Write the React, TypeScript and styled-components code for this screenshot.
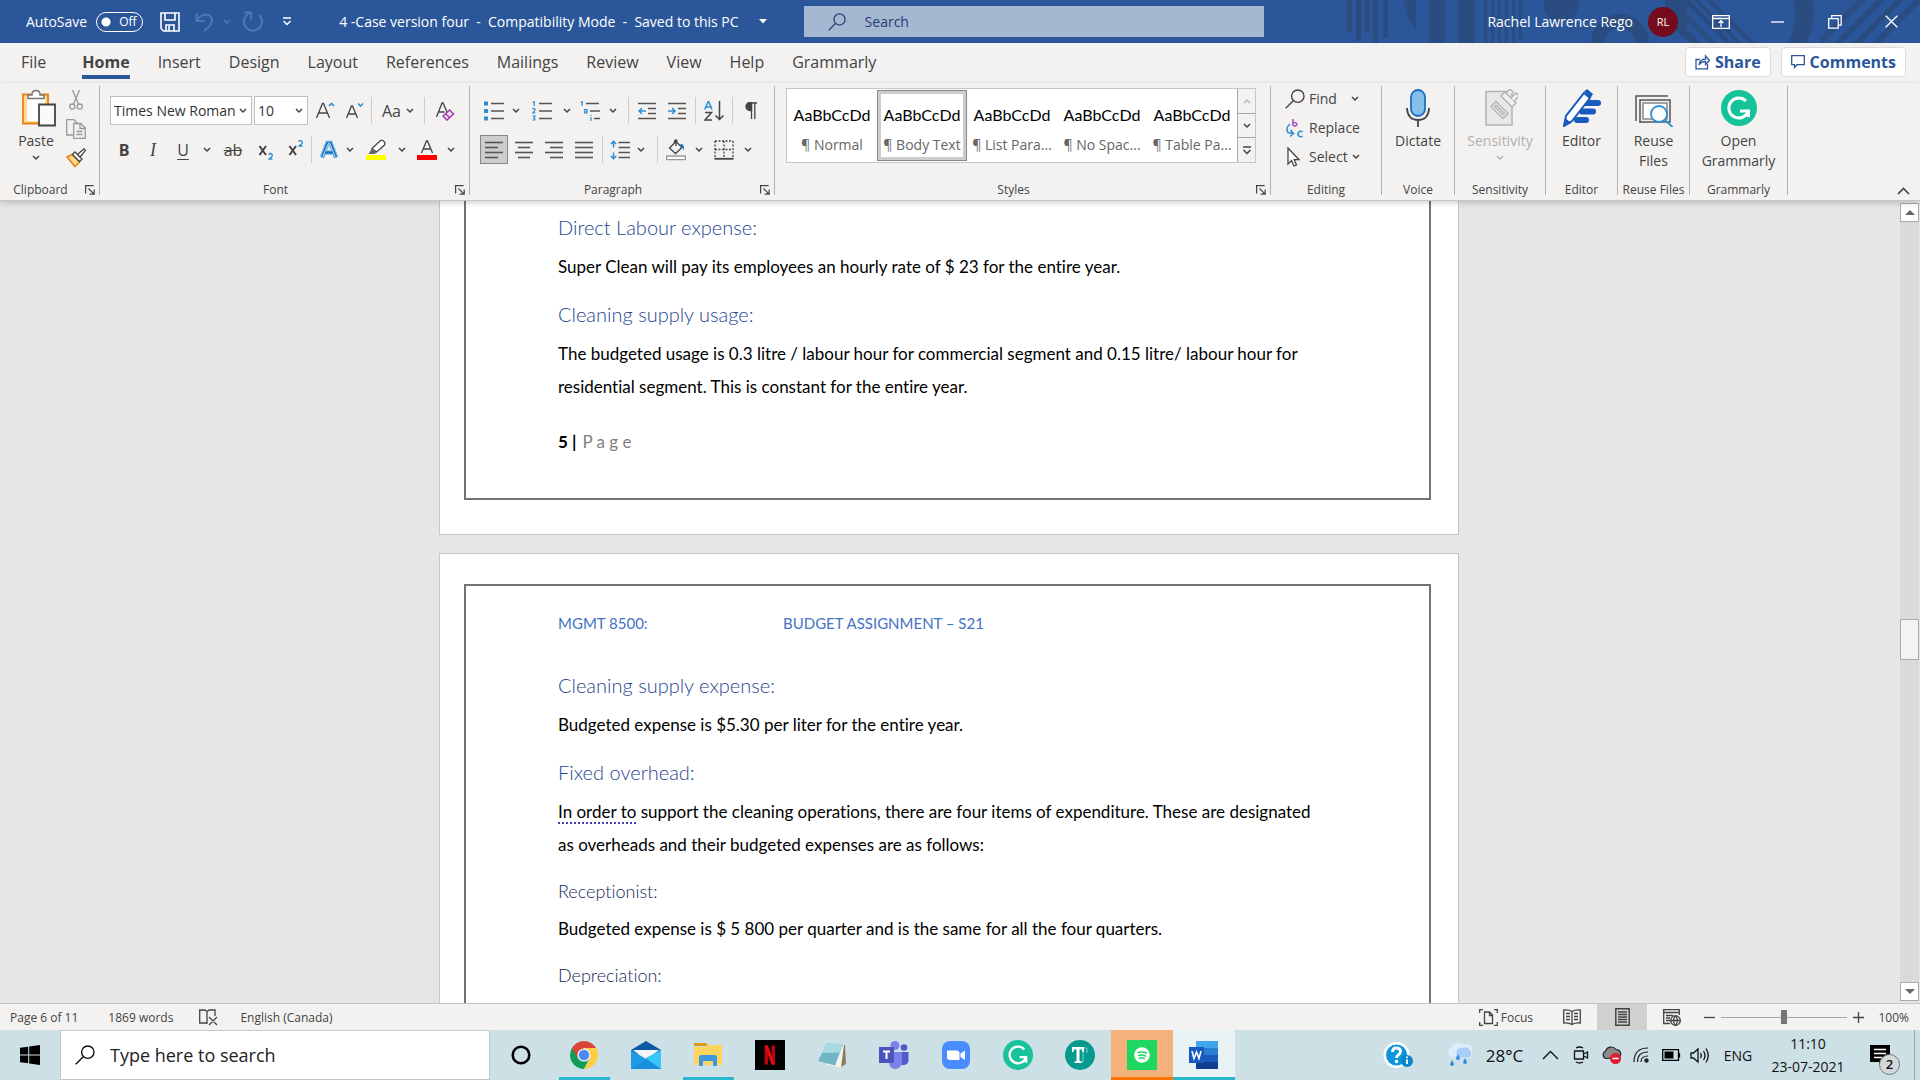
import React from "react";
import styled, { createGlobalStyle, css } from "styled-components";

const GlobalStyle = createGlobalStyle`
  *, *::before, *::after { box-sizing: border-box; }
  html, body, #root { height: 100%; }
  body { margin: 0; overflow: hidden; font-family: "Open Sans", "Noto Sans", sans-serif; font-size: 14px; color: #444; font-variant-ligatures: none; }
  button, input, select { font: inherit; color: inherit; margin: 0; }
  button { border: 0; padding: 0; background: none; display: inline-flex; align-items: center; justify-content: center; flex: none; }
  svg { display: block; flex: none; }
`;

const Window = styled.div`
  height: 100vh;
  display: flex;
  flex-direction: column;
`;
const Gap = styled.span<{ $w: number }>`
  width: ${(p) => p.$w}px;
`;
const Push = styled.span`
  flex: 1;
`;

/* ---------- Title bar ---------- */
const TitleBar = styled.header`
  position: relative;
  flex: none;
  height: 43px;
  background: #2b579a;
  color: #fff;
  display: flex;
  align-items: center;
  padding-left: 26px;
`;
const Pattern = styled.svg`
  position: absolute;
  right: 0;
  top: 0;
`;
const AutoSave = styled.label`
  display: flex;
  align-items: center;
  gap: 9px;
`;
const Toggle = styled.input`
  appearance: none;
  width: 47px;
  height: 20px;
  border: 1px solid #fff;
  border-radius: 10px;
  background: radial-gradient(circle at 9px 9px, #fff 4px, transparent 5px);
`;
const ToggleWrap = styled.span`
  position: relative;
  display: flex;
`;
const ToggleText = styled.span`
  position: absolute;
  left: 23px;
  top: 2px;
  font-size: 12px;
  line-height: 16px;
`;
const QuickTools = styled.div`
  display: flex;
  align-items: center;
  margin-left: 17px;
  width: 179px;
`;
const QuickButton = styled.button<{ $gap?: number; $dim?: boolean }>`
  margin-right: ${(p) => p.$gap ?? 0}px;
  opacity: ${(p) => (p.$dim ? 0.3 : 1)};
`;
const DocTitle = styled.button`
  gap: 20px;
  white-space: pre;
`;
const TitleSearch = styled.label`
  position: relative;
  display: flex;
  align-items: center;
  gap: 19px;
  flex: 0 1 460px;
  height: 31px;
  margin-left: 37px;
  padding-left: 24px;
  background: #a5b8d2;
  color: #1f4070;
`;
const BareInput = styled.input`
  flex: 1;
  min-width: 0;
  border: 0;
  padding: 0;
  background: none;
  outline: none;
  &::placeholder { color: currentColor; opacity: 1; }
`;
const Account = styled.div`
  position: relative;
  display: flex;
  align-items: center;
  gap: 15px;
  margin-left: auto;
`;
const Avatar = styled.button`
  width: 30px;
  height: 30px;
  border-radius: 50%;
  background: #750b1c;
  font-size: 11px;
  color: #fff;
`;
const WindowButtons = styled.div`
  position: relative;
  display: flex;
  margin-left: 14px;
`;
const WindowButton = styled.button`
  width: 57px;
  height: 43px;
`;

/* ---------- Tabs ---------- */
const TabBar = styled.nav`
  flex: none;
  height: 40px;
  background: #f3f2f1;
  display: flex;
  align-items: flex-start;
  gap: 28px;
  padding: 0 14px 0 21px;
  font-size: 16px;
`;
const Tab = styled.button<{ $active?: boolean }>`
  height: 36px;
  border-top: 5px solid transparent;
  border-bottom: 4px solid transparent;
  line-height: 22px;
  &:first-child { margin-right: 8px; }
  ${(p) => p.$active && css`font-weight: 700; border-bottom-color: #2b579a;`}
`;
const TabActions = styled.div`
  display: flex;
  gap: 10px;
  margin: 4px 0 0 auto;
`;
const ActionButton = styled.button`
  height: 30px;
  padding: 0 9px;
  gap: 5px;
  background: #fff;
  border: 1px solid #dedcda;
  border-radius: 4px;
  color: #2b579a;
  font-weight: 700;
`;

/* ---------- Ribbon ---------- */
const Ribbon = styled.section`
  flex: none;
  position: relative;
  z-index: 1;
  height: 118px;
  background: #f3f2f1;
  border-bottom: 1px solid #c8c6c4;
  box-shadow: 0 2px 6px rgba(0, 0, 0, 0.18);
  display: flex;
  padding-top: 3px;
`;
const Group = styled.div<{ $w: number }>`
  flex: none;
  width: ${(p) => p.$w}px;
  height: 109px;
  border-right: 1px solid #b3b0ad;
  display: flex;
  flex-direction: column;
`;
const GroupBody = styled.div<{ $pad?: number }>`
  flex: 1;
  display: flex;
  padding-left: ${(p) => p.$pad ?? 0}px;
`;
const GroupFooter = styled.div<{ $launch?: boolean }>`
  height: 10px;
  display: grid;
  grid-template-columns: ${(p) => (p.$launch ? "1fr 18px" : "1fr")};
  grid-template-rows: 10px;
  align-items: center;
  justify-items: center;
  font-size: 12px;
  line-height: 18px;
  white-space: nowrap;
`;
const ToolRows = styled.div`
  display: flex;
  flex-direction: column;
  padding-top: 10px;
  gap: 10px;
`;
const ToolRow = styled.div`
  display: flex;
  align-items: center;
  height: 29px;
`;
const Tool = styled.button<{ $w: number; $on?: boolean }>`
  width: ${(p) => p.$w}px;
  height: 29px;
  gap: 5px;
  ${(p) => p.$on && css`background: #cfcdcb; border: 1px solid #8a8886;`}
`;
const Divider = styled.span<{ $l?: number; $r?: number }>`
  width: 1px;
  height: 27px;
  background: #cfcdcb;
  margin: 0 ${(p) => p.$r ?? 1}px 0 ${(p) => p.$l ?? 1}px;
`;
const Combo = styled.span<{ $w: number }>`
  position: relative;
  display: flex;
  align-items: center;
  width: ${(p) => p.$w}px;
  height: 29px;
  margin-right: 2px;
  border: 1px solid #c2c0be;
  background: #fff;
  padding-right: 4px;
`;
const ComboSelect = styled.select`
  appearance: none;
  flex: 1;
  min-width: 0;
  border: 0;
  padding: 0 0 0 3px;
  background: none;
  color: #333;
  overflow: hidden;
  text-overflow: clip;
`;
const BigButton = styled.button`
  flex: 1;
  flex-direction: column;
  justify-content: flex-start;
  padding-top: 3px;
  line-height: 20px;
  gap: 4px;
  &:disabled { color: #b1afad; }
`;
const Column = styled.div<{ $gap: number; $top: number }>`
  display: flex;
  flex-direction: column;
  align-items: flex-start;
  gap: ${(p) => p.$gap}px;
  padding-top: ${(p) => p.$top}px;
`;
const PasteColumn = styled.div`
  width: 50px;
  display: flex;
  flex-direction: column;
`;
const ClipTool = styled.button`
  width: 30px;
  height: 20px;
`;
const EditRow = styled.button`
  height: 21px;
  gap: 4px;
`;
const Gallery = styled.div`
  display: flex;
  height: 75px;
  margin: 2px 0 0;
  border: 1px solid #c8c6c4;
  background: #fff;
`;
const StyleCard = styled.button<{ $on?: boolean }>`
  width: 90px;
  height: 71px;
  margin-top: 1px;
  flex-direction: column;
  gap: 10px;
  line-height: 20px;
  color: #666;
  border: 4px solid transparent;
  padding-top: 9px;
  white-space: nowrap;
  ${(p) => p.$on && css`border-color: #cfcdcb; outline: 1px solid #8a8886; outline-offset: -1px;`}
`;
const Sample = styled.span`
  font-family: Lato, "Open Sans", sans-serif;
  font-size: 16px;
  color: #000;
`;
const GalleryScroll = styled.div`
  display: flex;
  flex-direction: column;
  width: 18px;
  background: #f3f2f1;
  border-left: 1px solid #a9a7a5;
`;
const GalleryArrow = styled.button`
  flex: 1;
  & + & { border-top: 1px solid #a9a7a5; }
`;
const Collapse = styled.button`
  margin: auto 9px 2px auto;
  width: 16px;
  height: 14px;
`;

/* ---------- Document ---------- */
const Workspace = styled.main`
  flex: 1;
  min-height: 0;
  display: flex;
  background: #e6e6e6;
`;
const Pages = styled.div`
  flex: 1;
  overflow: hidden;
  display: flex;
  flex-direction: column;
  align-items: center;
  gap: 18px;
`;
const Sheet = styled.article<{ $part: "end" | "start" }>`
  flex: none;
  width: 1020px;
  max-width: 100%;
  background: #fff;
  border: 1px solid #c6c6c6;
  padding: ${(p) => (p.$part === "end" ? "0 27px 34px 24px" : "30px 27px 34px 24px")};
  ${(p) => p.$part === "end" && css`border-top: 0;`}
`;
const Frame = styled.div<{ $part: "end" | "start" }>`
  display: flex;
  flex-direction: column;
  border: 2px solid #767171;
  padding: ${(p) => (p.$part === "end" ? "0 104px 40px 92px" : "27px 104px 80px 92px")};
  ${(p) => p.$part === "end" && css`border-top: 0;`}
`;
const RunningHead = styled.div`
  display: grid;
  grid-template-columns: 225px 1fr;
  margin-bottom: 21px;
  font-family: Lato, "Open Sans", sans-serif;
  font-size: 15px;
  line-height: 20px;
  color: #4472c4;
`;
const Heading2 = styled.h2`
  margin: 17px 0 8px;
  font-family: Lato, "Open Sans", sans-serif;
  font-weight: 300;
  font-size: 20px;
  line-height: 29px;
  color: #1f4690;
  &:first-child { margin-top: 12px; }
`;
const Heading3 = styled.h3`
  margin: 17px 0 7px;
  font-family: Lato, "Open Sans", sans-serif;
  font-weight: 300;
  font-size: 18px;
  line-height: 27px;
  color: #142a55;
`;
const Body = styled.p`
  margin: 0;
  font-family: Lato, "Open Sans", sans-serif;
  font-size: 17px;
  line-height: 33px;
  color: #000;
`;
const Grammar = styled.span`
  text-decoration: underline dotted #4a3fb0 2px;
  text-underline-offset: 4px;
`;
const PageNumber = styled.footer`
  margin-top: 22px;
  font-family: Lato, "Open Sans", sans-serif;
  font-size: 17px;
  line-height: 33px;
  color: #7f7f7f;
  display: flex;
  gap: 6px;
`;
const Strong = styled.strong`
  color: #000;
`;
const ScrollBar = styled.div`
  flex: none;
  width: 22px;
  padding: 2px 1px 2px 2px;
  display: flex;
  flex-direction: column;
`;
const ScrollButton = styled.button`
  width: 19px;
  height: 19px;
  background: #fff;
  border: 1px solid #ababab;
`;
const ScrollTrack = styled.div`
  flex: 1;
  display: flex;
  flex-direction: column;
  background: #dadada;
`;
const Spacer = styled.div<{ $grow: number }>`
  flex: ${(p) => p.$grow} 0 0;
`;
const ScrollThumb = styled.div`
  height: 41px;
  background: #f3f3f3;
  border: 1px solid #ababab;
`;

/* ---------- Status bar ---------- */
const StatusBar = styled.footer`
  flex: none;
  height: 27px;
  background: #f3f2f1;
  border-top: 1px solid #c8c6c4;
  display: flex;
  align-items: center;
  padding: 0 11px 0 10px;
  font-size: 12px;
`;
const StatusItem = styled.button<{ $gap?: number }>`
  margin-right: ${(p) => p.$gap ?? 0}px;
  gap: 3px;
`;
const ViewButton = styled.button<{ $on?: boolean }>`
  width: 50px;
  height: 26px;
  background: ${(p) => (p.$on ? "#d2d0ce" : "none")};
`;
const Zoom = styled.div`
  display: flex;
  align-items: center;
  margin-left: 7px;
  gap: 6px;
`;
const ZoomRange = styled.input`
  appearance: none;
  width: 126px;
  height: 14px;
  background: linear-gradient(#a8a6a4, #a8a6a4) center / 100% 1px no-repeat;
  &::-webkit-slider-thumb { appearance: none; width: 6px; height: 14px; background: #767676; }
`;
const PercentValue = styled.button`
  width: 45px;
  justify-content: flex-end;
`;

/* ---------- Taskbar ---------- */
const Taskbar = styled.footer`
  flex: none;
  height: 50px;
  background: #cce0e6;
  display: flex;
  align-items: stretch;
  color: #111;
`;
const Start = styled.button`
  width: 60px;
`;
const TaskSearch = styled.label`
  flex: 0 1 430px;
  display: flex;
  align-items: center;
  gap: 15px;
  padding-left: 14px;
  background: #fff;
  border: 1px solid #c4c8ca;
  color: #222;
  font-size: 18px;
`;
const TaskButton = styled.button<{ $bar?: string; $bg?: string; $full?: boolean }>`
  position: relative;
  width: 62px;
  background: ${(p) => p.$bg ?? "none"};
  ${(p) =>
    p.$bar &&
    css`
      &::after {
        content: "";
        position: absolute;
        bottom: 0;
        left: ${p.$full ? 0 : 6}px;
        right: ${p.$full ? 0 : 5}px;
        height: 3px;
        background: ${p.$bar};
      }
    `}
`;
const Tray = styled.div`
  display: flex;
  margin-left: auto;
  align-items: stretch;
`;
const TrayButton = styled.button<{ $w: number }>`
  width: ${(p) => p.$w}px;
`;
const Weather = styled.button`
  width: 92px;
  gap: 14px;
  font-size: 17px;
  white-space: nowrap;
`;
const Clock = styled.button`
  width: 92px;
  flex-direction: column;
  line-height: 23px;
`;
const Peek = styled.div`
  width: 6px;
  border-left: 1px solid #93a9b0;
`;
const Badged = styled.span`
  position: relative;
  margin-right: 14px;
`;
const Badge = styled.span`
  position: absolute;
  left: 9px;
  top: 9px;
  width: 21px;
  height: 21px;
  border: 1px solid #777;
  border-radius: 50%;
  background: #d3d8da;
  font-size: 13px;
  font-weight: 600;
  line-height: 19px;
`;

/* ---------- Icons ---------- */
type IconProps = { w?: number; h?: number; vb?: string; children: React.ReactNode; stroke?: string; sw?: number };
const Icon = ({ w = 20, h = 20, vb, children, stroke = "#444", sw = 1.3 }: IconProps) => (
  <svg width={w} height={h} viewBox={vb ?? `0 0 ${w} ${h}`} fill="none" stroke={stroke} strokeWidth={sw} aria-hidden="true">
    {children}
  </svg>
);
const Chevron = ({ c = "#444" }: { c?: string }) => (
  <Icon w={8} h={6} stroke={c} sw={1.5}><path d="M1 1l3 3 3-3" /></Icon>
);
const Magnifier = ({ s = 20, c = "#444", sw = 1.4 }: { s?: number; c?: string; sw?: number }) => (
  <Icon w={s} h={s} vb="0 0 20 20" stroke={c} sw={sw}><circle cx="12.8" cy="7.2" r="6.2" /><path d="M8.3 11.7L.7 19.3" /></Icon>
);
const Launcher = ({ name }: { name: string }) => (
  <button aria-label={name + " settings"}>
    <Icon w={10} h={10} sw={1.2}><path d="M.6 8.5V.6h8M3.5 3.5l5.3 5.3M9.2 4.6v4.6H4.6" /></Icon>
  </button>
);
const Lines = ({ rows }: { rows: [number, number][] }) => (
  <Icon w={20} h={20} stroke="#555" sw={1.6}>
    {rows.map(([a, b], i) => <path key={i} d={`M${a} ${2.5 + i * 5}H${b}`} />)}
  </Icon>
);
const Footer = ({ name, launch }: { name: string; launch?: boolean }) => (
  <GroupFooter $launch={launch}><span>{name}</span>{launch && <Launcher name={name} />}</GroupFooter>
);

const TABS = ["File", "Home", "Insert", "Design", "Layout", "References", "Mailings", "Review", "View", "Help", "Grammarly"];
const STYLES = ["Normal", "Body Text", "List Para...", "No Spac...", "Table Pa..."];

const TitlePattern = () => (
  <Pattern width="580" height="43" viewBox="1340 0 580 43" fill="#2a4c80" aria-hidden="true">
    <path d="M1347 0h5v32h-5zM1356 0h5v41h-5zM1365 0h5v32h-5zM1373 0h5v43h-5zM1383 0h5v38h-5zM1404 0h12v31q-11-15-12-31z" />
    <path d="M1429 0h16v43h-16zM1458 0h16v43h-16zM1484 0h3v43h-3zM1491 0h3v43h-3zM1498 0h3v43h-3zM1505 0h3v43h-3zM1512 0h3v43h-3zM1519 0h3v40h-3z" />
    <circle cx="1561" cy="5" r="17" />
    <circle cx="1620" cy="43" r="22" fill="none" stroke="#2a4c80" strokeWidth="14" />
    <path d="M1665 0h25l43 43h-8l-38-38v8l30 30h-8l-22-22v8l14 14h-8q-30-15-28-43z" />
    <path d="M1693 0h6l43 43h-6zM1706 0h6l43 43h-6z" />
    <path d="M1793 0h20q3 25-7 43h-18q11-22 5-43zM1820 38l38-38h8l-43 43h-3zM1834 43l43-43h8l-43 43zM1853 43l43-43h8l-43 43zM1872 43l43-43h5v3l-40 40z" />
  </Pattern>
);

const TitleRegion = () => (
  <TitleBar>
    <TitlePattern />
    <AutoSave>
      AutoSave
      <ToggleWrap><Toggle type="checkbox" /><ToggleText>Off</ToggleText></ToggleWrap>
    </AutoSave>
    <QuickTools>
      <QuickButton $gap={15} aria-label="Save">
        <Icon w={20} h={20} stroke="#fff" sw={1.6}><path d="M1 1h18v18H3.5L1 16.5zM5 1v7h10V1M6 19v-6h8v6M9 14v5" /></Icon>
      </QuickButton>
      <QuickButton $gap={9} $dim aria-label="Undo">
        <Icon w={19} h={20} stroke="#a9c4ee" sw={1.8}><path d="M1.500 1v8h8M1.800 8.800C6 .500 17 .500 17 8.500C17 13 12 16 9 19" /></Icon>
      </QuickButton>
      <QuickButton $gap={12} $dim aria-label="Undo history"><Chevron c="#a9c4ee" /></QuickButton>
      <QuickButton $gap={18} $dim aria-label="Repeat">
        <Icon w={21} h={21} stroke="#a9c4ee" sw={1.8}><path d="M1 1.500h7v7M7.500 2A9 9 0 1 0 16 4" /></Icon>
      </QuickButton>
      <QuickButton aria-label="Customize toolbar">
        <Icon w={10} h={9} stroke="#fff" sw={1.4}><path d="M1 1h8M1.500 4l3.500 3.500L8.500 4" /></Icon>
      </QuickButton>
    </QuickTools>
    <DocTitle>
      {"4 -Case version four  -  Compatibility Mode  -  Saved to this PC"}
      <Icon w={8} h={5} stroke="none"><path d="M0 0h8L4 4.500z" fill="#fff" /></Icon>
    </DocTitle>
    <TitleSearch>
      <Magnifier s={18} c="#1f4070" />
      <BareInput placeholder="Search" aria-label="Search" />
    </TitleSearch>
    <Account>Rachel Lawrence Rego<Avatar>RL</Avatar></Account>
    <WindowButtons>
      <WindowButton aria-label="Ribbon display options">
        <Icon w={18} h={14} stroke="#fff" sw={1.3}><path d="M.7.7h16.600v12.600H.7zM.7 3.500h16.600M9 12V6M6.500 8L9 5.700 11.500 8" /></Icon>
      </WindowButton>
      <WindowButton aria-label="Minimize"><Icon w={13} h={2} stroke="#fff"><path d="M0 1h13" /></Icon></WindowButton>
      <WindowButton aria-label="Restore">
        <Icon w={14} h={14} stroke="#fff"><path d="M.7 3.700h9.500v9.500H.7zM3.700 3.500V.7h9.500v9.500h-3" /></Icon>
      </WindowButton>
      <WindowButton aria-label="Close"><Icon w={13} h={13} stroke="#fff"><path d="M.7.7l11.600 11.600M12.300.7L.7 12.300" /></Icon></WindowButton>
    </WindowButtons>
  </TitleBar>
);

const Letter = styled.span<{ $s?: number; $b?: boolean; $i?: boolean; $u?: boolean; $x?: boolean }>`
  font-size: ${(p) => p.$s ?? 16}px;
  line-height: 20px;
  font-weight: ${(p) => (p.$b ? 700 : 400)};
  font-style: ${(p) => (p.$i ? "italic" : "normal")};
  font-family: ${(p) => (p.$i ? '"Liberation Serif", serif' : "inherit")};
  text-decoration: ${(p) => (p.$u ? "underline" : p.$x ? "line-through" : "none")};
  text-underline-offset: 3px;
`;

const RibbonRegion = () => (
  <Ribbon>
    <Group $w={100}>
      <GroupBody $pad={11}>
        <PasteColumn>
          <BigButton>
            <Icon w={42} h={38} vb="-5 0 42 38" sw={1.8}>
              <path d="M3 5.500h25v29H3z" fill="#fbdc8d" stroke="#e5811a" />
              <path d="M7 8h18v24H7z" fill="#fff" stroke="none" />
              <path d="M8 9.500V6h4q0-4.500 4-4.500T20 6h4v3.500z" fill="#fff" stroke="#777" strokeWidth="1.500" />
              <path d="M19 15.500h16v21H19z" fill="#fafafa" />
            </Icon>
            Paste
            <Chevron />
          </BigButton>
        </PasteColumn>
        <Column $gap={9} $top={4}>
          <ClipTool aria-label="Cut">
            <Icon w={14} h={20} stroke="#999"><path d="M3.500 0l6 14M10.500 0l-6 14" /><circle cx="3.300" cy="16.600" r="2.600" /><circle cx="10.700" cy="16.600" r="2.600" /></Icon>
          </ClipTool>
          <ClipTool aria-label="Copy">
            <Icon w={20} h={20} stroke="#999"><path d="M7 16H.7V.7H8L11 4M7.700 4.500h7l4.600 4.500v10.300H7.700zM14 4.500V9.500h5M10.500 12.500h6M10.500 15.500h6" /></Icon>
          </ClipTool>
          <ClipTool aria-label="Format painter">
            <Icon w={20} h={20}><path d="M1 9L6 6.500l7.500 7.500L9 18.500z" fill="#fbdc8d" stroke="#e5811a" strokeWidth="1.600" /><path d="M6.500 6.500L9 4l7 7-2.500 2.500z" fill="#fff" /><path d="M11.500 6.500L18 .8l1.500 1.500-5.500 6.700z" fill="#fff" /></Icon>
          </ClipTool>
        </Column>
      </GroupBody>
      <Footer name="Clipboard" launch />
    </Group>

    <Group $w={370}>
      <GroupBody $pad={10}>
        <ToolRows>
          <ToolRow>
            <Combo $w={142}><ComboSelect aria-label="Font"><option>Times New Roman</option></ComboSelect><Chevron /></Combo>
            <Combo $w={54}><ComboSelect aria-label="Font size"><option>10</option></ComboSelect><Chevron /></Combo>
            <Tool $w={30} aria-label="Grow font"><Icon w={20} h={20}><path d="M1.500 17L7.500 2.500h1L14.500 17M4 12h8" /><path d="M14 5l2.500-2.500L19 5" stroke="#2b8fd6" strokeWidth="1.600" /></Icon></Tool>
            <Tool $w={30} aria-label="Shrink font"><Icon w={20} h={20}><path d="M1.500 17L6.500 5h1l5 12M3.500 13h7" /><path d="M13 2.500L15.500 5 18 2.500" stroke="#2b8fd6" strokeWidth="1.600" /></Icon></Tool>
            <Divider />
            <Tool $w={50} aria-label="Change case"><Letter>Aa</Letter><Chevron /></Tool>
            <Divider />
            <Tool $w={38} aria-label="Clear formatting">
              <Icon w={20} h={20}><path d="M1.500 16L7 2h1l4 9M3.500 11h6" /><path d="M8 15l6.500-6 4 4L12 19zM10.500 12.500l4 4" stroke="#a33bab" strokeWidth="1.500" fill="#f3e3f5" /></Icon>
            </Tool>
          </ToolRow>
          <ToolRow>
            <Tool $w={28} aria-label="Bold"><Letter $b>B</Letter></Tool>
            <Tool $w={30} aria-label="Italic"><Letter $s={18} $i>I</Letter></Tool>
            <Tool $w={30} aria-label="Underline"><Letter $u>U</Letter></Tool>
            <Tool $w={18} aria-label="Underline style"><Chevron /></Tool>
            <Tool $w={34} aria-label="Strikethrough"><Letter $x>ab</Letter></Tool>
            <Tool $w={32} aria-label="Subscript"><Icon w={16} h={20} sw={2}><path d="M1.500 6l6.500 9M8 6l-6.500 9" /><path d="M10.500 14.500q2-2 3.500 0t-3.500 4.500h4" stroke="#2b8fd6" strokeWidth="1.300" /></Icon></Tool>
            <Tool $w={28} aria-label="Superscript"><Icon w={16} h={20} sw={2}><path d="M1.500 6l6.500 9M8 6l-6.500 9" /><path d="M10.500 1.500q2-2 3.500 0t-3.500 4.500h4" stroke="#2b8fd6" strokeWidth="1.300" /></Icon></Tool>
            <Divider />
            <Tool $w={32} aria-label="Text effects"><Icon w={20} h={20} stroke="#8fc6ee" sw={5}><path d="M3 17.500L8.500 3h3L17 17.500M5.500 12.500h9" /><path d="M3 17.500L8.500 3h3L17 17.500M5.500 12.500h9" stroke="#1a70bf" strokeWidth="2.600" /><path d="M3.500 17.500L9.500 3h1l6 14.500" stroke="#fff" strokeWidth=".7" /></Icon></Tool>
            <Tool $w={10} aria-label="Text effects options"><Chevron /></Tool>
            <Tool $w={42} aria-label="Highlight"><Icon w={20} h={22}><path d="M6 9.500l8.500-8q2-1 3.500 1t.500 3.500L10.500 13z" fill="#fff" /><path d="M6 9l5 4.500-3 1.500H2.500z" fill="#666" stroke="none" /><path d="M0 16h20v5H0z" fill="#ff0" stroke="none" /></Icon></Tool>
            <Tool $w={10} aria-label="Highlight color"><Chevron /></Tool>
            <Tool $w={40} aria-label="Font color"><Icon w={20} h={22}><path d="M4.500 14L9.500 2h1l5 12M6.500 10h7" /><path d="M0 16h20v5H0z" fill="#f00" stroke="none" /></Icon></Tool>
            <Tool $w={8} aria-label="Font color options"><Chevron /></Tool>
          </ToolRow>
        </ToolRows>
      </GroupBody>
      <Footer name="Font" launch />
    </Group>

    <Group $w={305}>
      <GroupBody $pad={8}>
        <ToolRows>
          <ToolRow>
            <Tool $w={32} aria-label="Bullets"><Icon w={20} h={20} sw={1.600}><path d="M7 2.500h13M7 10h13M7 17.500h13" stroke="#555" /><path d="M0 .5h4v4H0zM0 8h4v4H0zM0 15.500h4v4H0z" fill="#2b8fd6" stroke="none" /></Icon></Tool>
            <Tool $w={12} aria-label="Bullet options"><Chevron /></Tool>
            <Tool $w={40} aria-label="Numbering"><Icon w={20} h={20} sw={1.600}><path d="M7 2.500h13M7 10h13M7 17.500h13" stroke="#555" /><path d="M.8 1.500L2.200.5v4.500M.5 8q2-1.500 2.500.3T.5 12h3M.5 15h2.500l-1 2q1.500.5.7 2H.3" stroke="#2b8fd6" strokeWidth="1.200" /></Icon></Tool>
            <Tool $w={10} aria-label="Numbering options"><Chevron /></Tool>
            <Tool $w={36} aria-label="Multilevel list"><Icon w={20} h={20} sw={1.600}><path d="M6 2.500h13M10 10h10M14 17.500h6" stroke="#555" /><path d="M.8 1.500L2.200.5v4.500M4 8.500h3V12H4.500V10H7M11 14v.9M11 16v4" stroke="#2b8fd6" strokeWidth="1.200" /></Icon></Tool>
            <Tool $w={10} aria-label="Multilevel options"><Chevron /></Tool>
            <Divider $l={10} $r={4} />
            <Tool $w={28} aria-label="Decrease indent"><Icon w={18} h={20} sw={1.500}><path d="M0 2.500h18M10 7.500h8M10 12.500h8M0 17.500h18" stroke="#555" /><path d="M8 10H1M4 7l-3 3 3 3" stroke="#2b8fd6" /></Icon></Tool>
            <Tool $w={31} aria-label="Increase indent"><Icon w={18} h={20} sw={1.500}><path d="M0 2.500h18M10 7.500h8M10 12.500h8M0 17.500h18" stroke="#555" /><path d="M0 10h7M4 7l3 3-3 3" stroke="#2b8fd6" /></Icon></Tool>
            <Divider $l={3} $r={0} />
            <Tool $w={36} aria-label="Sort"><Icon w={20} h={20} sw={1.500}><path d="M.8 8.500L4 .8h.8L8 8.500M2 6h5" stroke="#2b8fd6" /><path d="M1 11.500h6.500L1 19h7M15.500 0v18.500M11.500 14.500l4 4 4-4" /></Icon></Tool>
            <Divider $l={0} $r={0} />
            <Tool $w={36} aria-label="Show paragraph marks"><Icon w={12} h={18} sw={1.300}><path d="M6 1H12M6.500 1v16M9.800 1v16" /><path d="M6.500.5H5a4 4 0 0 0 0 8h1.500z" fill="#444" /></Icon></Tool>
          </ToolRow>
          <ToolRow>
            <Gap $w={2} />
            <Tool $w={28} $on aria-label="Align left"><Lines rows={[[1, 19], [1, 14], [1, 19], [1, 14]]} /></Tool>
            <Gap $w={1} />
            <Tool $w={30} aria-label="Center"><Lines rows={[[1, 19], [4, 16], [1, 19], [4, 16]]} /></Tool>
            <Tool $w={30} aria-label="Align right"><Lines rows={[[1, 19], [6, 19], [1, 19], [6, 19]]} /></Tool>
            <Tool $w={30} aria-label="Justify"><Lines rows={[[1, 19], [1, 19], [1, 19], [1, 19]]} /></Tool>
            <Divider $l={3} $r={0} />
            <Tool $w={34} aria-label="Line spacing"><Icon w={20} h={20} sw={1.500}><path d="M8.500 2.500H20M8.500 7.500H20M8.500 12.500H20M8.500 17.500H20" stroke="#555" /><path d="M3.500 1.500v6M3.500 12.500v6M.8 4l2.700-2.700L6.200 4M.8 16l2.700 2.700L6.200 16" stroke="#2b8fd6" /></Icon></Tool>
            <Tool $w={8} aria-label="Line spacing options"><Chevron /></Tool>
            <Divider $l={12} $r={0} />
            <Tool $w={36} aria-label="Shading"><Icon w={20} h={22}><path d="M3.500 9L10 2.500l6 6-6.500 6zM10 2.500V7M8 4.500Q9-1 11.500 2" fill="none" /><path d="M14.500 5q4-1 3.500 7-1-4-3.500-4z" fill="#1a70bf" stroke="none" /><path d="M.6 17h18.800v3.600H.6z" fill="#fff" stroke="#999" /></Icon></Tool>
            <Tool $w={10} aria-label="Shading color"><Chevron /></Tool>
            <Tool $w={40} aria-label="Borders"><Icon w={20} h={20} sw={1.300}><path d="M1 1h18M1 1v17M19 1v17M10 1v17M1 9.500h18" strokeDasharray="2 1.500" /><path d="M.5 18.800h19" strokeWidth="1.800" /></Icon></Tool>
            <Tool $w={8} aria-label="Border options"><Chevron /></Tool>
          </ToolRow>
        </ToolRows>
      </GroupBody>
      <Footer name="Paragraph" launch />
    </Group>

    <Group $w={496}>
      <GroupBody $pad={11}>
        <Gallery>
          {STYLES.map((s) => (
            <StyleCard key={s} $on={s === "Body Text"}>
              <Sample>AaBbCcDd</Sample>
              <span>¶ {s}</span>
            </StyleCard>
          ))}
          <GalleryScroll>
            <GalleryArrow aria-label="Previous styles"><Icon w={8} h={6} stroke="#b5b3b1" sw={1.500}><path d="M1 5l3-3 3 3" /></Icon></GalleryArrow>
            <GalleryArrow aria-label="Next styles"><Chevron /></GalleryArrow>
            <GalleryArrow aria-label="More styles"><Icon w={10} h={9} sw={1.500}><path d="M1 1h8M1.500 4L5 7.500 8.500 4" /></Icon></GalleryArrow>
          </GalleryScroll>
        </Gallery>
      </GroupBody>
      <Footer name="Styles" launch />
    </Group>

    <Group $w={111}>
      <GroupBody $pad={14}>
        <Column $gap={8} $top={2}>
          <EditRow><Magnifier />Find<Gap $w={6} /><Chevron /></EditRow>
          <EditRow>
            <Icon w={20} h={20} sw={1.600}><path d="M8 1v7M8 5.500a2 1.800 0 1 1 0 1.500" stroke="#b04fc0" /><path d="M5 6q-5 4-2 8.500l5 1M5.500 12l3 3.500-3.500 3" stroke="#2b8fd6" /><path d="M17.500 14a2.600 2.800 0 1 0 0 4" stroke="#2b8fd6" /></Icon>
            Replace
          </EditRow>
          <EditRow><Icon w={20} h={20}><path d="M3 1v16l3.500-3.500L9 19l2.500-1-2.300-5.300H14z" fill="#fff" /></Icon>Select<Chevron /></EditRow>
        </Column>
      </GroupBody>
      <Footer name="Editing" />
    </Group>

    <Group $w={73}>
      <GroupBody>
        <BigButton>
          <Icon w={36} h={38} sw={1.800}><rect x="11" y="1" width="14" height="26" rx="7" fill="#83beec" stroke="#1a70bf" /><path d="M7 19v1q1 11 11 11t11-11v-1M18 31v7" /></Icon>
          Dictate
        </BigButton>
      </GroupBody>
      <Footer name="Voice" />
    </Group>

    <Group $w={91}>
      <GroupBody>
        <BigButton disabled>
          <Icon w={36} h={38} stroke="#b5b3b1" sw={1.500}>
            <path d="M4 2.500h26V36H4z" fill="#eae8e6" />
            <path d="M9 17.500l5-5 12 12-5 5z" fill="#f3f2f1" /><path d="M12.500 17.500l1.500-1.500 8.500 8.500-1.500 1.500z" />
            <path d="M19 7l4-4 11 11-4 4z" fill="#f3f2f1" /><path d="M24 4l4-4 4 4M29 9l5-5 3 3-5 5" fill="#f3f2f1" />
          </Icon>
          Sensitivity
          <Chevron c="#b1afad" />
        </BigButton>
      </GroupBody>
      <Footer name="Sensitivity" />
    </Group>

    <Group $w={72}>
      <GroupBody>
        <BigButton>
          <Icon w={38} h={38} stroke="#185abd" sw={6}><path d="M22 14h13M19 22.500h11M14 31h9" strokeLinecap="round" /><path d="M21 4l6 5L9 32l-8 5 2-10z" fill="#fff" strokeWidth="2" /><path d="M21 2.500L24 0l6 5-2.500 4zM2 29L0 38l8.500-4z" fill="#185abd" stroke="none" /></Icon>
          Editor
        </BigButton>
      </GroupBody>
      <Footer name="Editor" />
    </Group>

    <Group $w={72}>
      <GroupBody>
        <BigButton>
          <Icon w={38} h={38} stroke="#555" sw={1.500}><path d="M1 32V7h32M5 34V11h30v22H5" /><path d="M8 14h24v16H8z" fill="#fff" stroke="#888" /><circle cx="24" cy="25" r="8" fill="#fff" stroke="#2b8fd6" strokeWidth="1.800" /><path d="M30 31l8 7.500" stroke="#2b8fd6" strokeWidth="1.800" /></Icon>
          <span>Reuse<br />Files</span>
        </BigButton>
      </GroupBody>
      <Footer name="Reuse Files" />
    </Group>

    <Group $w={98}>
      <GroupBody>
        <BigButton>
          <Icon w={36} h={38} stroke="#fff" sw={3}>
            <circle cx="18" cy="19" r="18" fill="#15c39a" stroke="none" />
            <path d="M25 12A10 10 0 1 0 27 23M19 22h8.500v6" />
          </Icon>
          <span>Open<br />Grammarly</span>
        </BigButton>
      </GroupBody>
      <Footer name="Grammarly" />
    </Group>
    <Collapse aria-label="Collapse ribbon"><Icon w={13} h={8} sw={1.600}><path d="M1 7l5.500-5.500L12 7" /></Icon></Collapse>
  </Ribbon>
);

const DocumentRegion = () => (
  <Workspace>
    <Pages>
      <Sheet $part="end">
        <Frame $part="end">
          <Heading2>Direct Labour expense:</Heading2>
          <Body>Super Clean will pay its employees an hourly rate of $ 23 for the entire year.</Body>
          <Heading2>Cleaning supply usage:</Heading2>
          <Body>The budgeted usage is 0.3 litre / labour hour for commercial segment and 0.15 litre/ labour hour for residential segment. This is constant for the entire year.</Body>
          <PageNumber><Strong>5 |</Strong> P a g e</PageNumber>
        </Frame>
      </Sheet>
      <Sheet $part="start">
        <Frame $part="start">
          <RunningHead><span>MGMT 8500:</span><span>BUDGET ASSIGNMENT – S21</span></RunningHead>
          <Heading2>Cleaning supply expense:</Heading2>
          <Body>Budgeted expense is $5.30 per liter for the entire year.</Body>
          <Heading2>Fixed overhead:</Heading2>
          <Body><Grammar>In order to</Grammar> support the cleaning operations, there are four items of expenditure. These are designated as overheads and their budgeted expenses are as follows:</Body>
          <Heading3>Receptionist:</Heading3>
          <Body>Budgeted expense is $ 5 800 per quarter and is the same for all the four quarters.</Body>
          <Heading3>Depreciation:</Heading3>
        </Frame>
      </Sheet>
    </Pages>
    <ScrollBar>
      <ScrollButton aria-label="Scroll up"><Icon w={10} h={5} stroke="none"><path d="M0 5h10L5 0z" fill="#666" /></Icon></ScrollButton>
      <ScrollTrack><Spacer $grow={396} /><ScrollThumb /><Spacer $grow={321} /></ScrollTrack>
      <ScrollButton aria-label="Scroll down"><Icon w={10} h={5} stroke="none"><path d="M0 0h10L5 5z" fill="#666" /></Icon></ScrollButton>
    </ScrollBar>
  </Workspace>
);

const StatusRegion = () => (
  <StatusBar>
    <StatusItem $gap={30}>Page 6 of 11</StatusItem>
    <StatusItem $gap={26}>1869 words</StatusItem>
    <StatusItem $gap={22} aria-label="Proofing">
      <Icon w={19} h={17}><path d="M8 14H.7V1H6l2 1.500V15M8 2.500L10 1h6v6M10 8l8 8M18 8l-8 8" /></Icon>
    </StatusItem>
    <StatusItem>English (Canada)</StatusItem>
    <Push />
    <StatusItem $gap={14}>
      <Icon w={19} h={17}><path d="M4 .7H.7V4M15 .7h3.300V4M4 16.300H.7V13M15 16.300h3.300V13M5.500 3h5l3 3v8.500h-8zM10.500 3v3.500h3" /></Icon>
      Focus
    </StatusItem>
    <ViewButton aria-label="Read mode"><Icon w={18} h={17}><path d="M9 2.500Q6 .5.700 1v13q5-.5 8.300 1.500Q12 13.500 17.300 14V1Q12 .5 9 2.500v13M3 4.500h4M3 7.500h4M3 10.500h4M11 4.500h4M11 7.500h4M11 10.500h4" /></Icon></ViewButton>
    <ViewButton $on aria-label="Print layout"><Icon w={15} h={18} sw={1.500}><path d="M.8.800h13.400v16.400H.8zM3 4h9M3 6.500h9M3 9h9M3 11.500h9M3 14h9" /></Icon></ViewButton>
    <ViewButton aria-label="Web layout"><Icon w={18} h={17}><path d="M7 14.500H.7V.7h15.600V6M.7 3.500h15.600M3 6.500h7M3 9h4M3 11.500h4" /><circle cx="12.500" cy="11.500" r="4.800" /><path d="M7.700 11.500h9.600M12.500 6.700q-4 4.800 0 9.600 4-4.800 0-9.600" /></Icon></ViewButton>
    <Zoom>
      <StatusItem aria-label="Zoom out"><Icon w={11} h={11}><path d="M0 5.500h11" /></Icon></StatusItem>
      <ZoomRange type="range" min={0} max={100} defaultValue={50} aria-label="Zoom" />
      <StatusItem aria-label="Zoom in"><Icon w={11} h={11}><path d="M0 5.500h11M5.500 0v11" /></Icon></StatusItem>
    </Zoom>
    <PercentValue>100%</PercentValue>
  </StatusBar>
);

const TaskbarRegion = () => (
  <Taskbar>
    <Start aria-label="Start"><Icon w={20} h={20} stroke="none"><path d="M0 2.800l8.200-1.100v7.800H0zM9.200 1.500L20 0v9.500H9.200zM0 10.500h8.200v7.800L0 17.200zM9.200 10.500H20V20L9.200 18.500z" fill="#000" /></Icon></Start>
    <TaskSearch><Magnifier c="#111" /><BareInput placeholder="Type here to search" aria-label="Type here to search" /></TaskSearch>
    <TaskButton aria-label="Cortana"><Icon w={20} h={20} stroke="#000" sw={2.600}><circle cx="10" cy="10" r="8.300" /></Icon></TaskButton>
    <Gap $w={1} />
    <TaskButton $bar="#2bb8cf" aria-label="Chrome">
      <Icon w={28} h={28} stroke="none">
        <path d="M14 14L1.900 7A14 14 0 0 0 14 28l7-14z" fill="#0f9d58" />
        <path d="M14 7h12.100A14 14 0 0 1 14 28l6-10.500z" fill="#ffcd40" />
        <path d="M14 7h12.100A14 14 0 0 0 1.900 7l6 10z" fill="#db4437" />
        <circle cx="14" cy="14" r="6.600" fill="#f1f1f1" /><circle cx="14" cy="14" r="5.200" fill="#4c8bf5" />
      </Icon>
    </TaskButton>
    <TaskButton aria-label="Mail">
      <Icon w={30} h={28} stroke="none"><path d="M0 9L15 0l15 9v4H0z" fill="#0c59a4" /><path d="M2 9h26L15 19z" fill="#f4f4f4" /><path d="M0 9l15 9 15-9v19H0z" fill="#1f9be6" /><path d="M30 9v19L14 17.500z" fill="#37c6f4" /><path d="M0 28l16-10 14 10z" fill="#1a86d8" opacity=".6" /></Icon>
    </TaskButton>
    <TaskButton $bar="#2bb8cf" aria-label="File Explorer">
      <Icon w={28} h={24} stroke="none"><path d="M0 0h12l2 3H0z" fill="#dd9b08" /><path d="M0 4h12l2-2h14v20H0z" fill="#ffd45e" /><path d="M5 23V14q0-2 2-2h14q2 0 2 2v9h-4v-5H9v5z" fill="#3a96dd" /></Icon>
    </TaskButton>
    <TaskButton aria-label="Netflix"><Icon w={30} h={30} stroke="none"><path d="M0 0h30v30H0z" fill="#000" /><path d="M9.500 5.500h3.500V24.500q-1.700 0-3.500.3zM16.500 5.500H20v19.300q-1.700-.3-3.500-.3z" fill="#b1060f" /><path d="M9.500 5.500H13l7 19.300q-1.700-.3-3.500-.3z" fill="#e50914" /></Icon></TaskButton>
    <TaskButton aria-label="Notepad"><Icon w={28} h={26} stroke="none"><path d="M12 2l15 1 1 19-5 3z" fill="#8c7b5a" /><path d="M12 1l14 1.500-3 23L9 23z" fill="#f2f2ee" /><path d="M9 1l16 1.500-8 21L0 19z" fill="#6fb5c4" /><path d="M9 1l16 1.500-3 8L4 11z" fill="#a8d9e2" /></Icon></TaskButton>
    <TaskButton aria-label="Teams"><Icon w={30} h={28} stroke="none"><circle cx="25" cy="6.500" r="3.300" fill="#5059c9" /><path d="M21 11h8.500v9q-1 4-5 4H21z" fill="#5059c9" /><circle cx="16" cy="4.500" r="4.500" fill="#7b83eb" /><path d="M10 11h13v10q-1 7-7 7t-6-7z" fill="#7b83eb" /><path d="M0 6h15v16H0z" fill="#4b53bc" /><path d="M4 10.500h7M7.500 10.500V18" stroke="#fff" strokeWidth="2" /></Icon></TaskButton>
    <TaskButton aria-label="Zoom"><Icon w={28} h={28} stroke="none"><rect width="28" height="28" rx="8" fill="#4a8cff" /><path d="M5 9.500h9.500q3 0 3 3V19H8q-3 0-3-3zM18.500 12.500l4.500-3V19l-4.500-3z" fill="#fff" /></Icon></TaskButton>
    <TaskButton aria-label="Grammarly">
      <Icon w={30} h={30} vb="0 0 36 36" stroke="#fff" sw={2.800}><circle cx="18" cy="18" r="18" fill="#18c29b" stroke="none" /><path d="M25.500 11.300A10 10 0 1 0 27.600 20.500H20M27.800 27.200v-6.800" /></Icon>
    </TaskButton>
    <TaskButton aria-label="Thesaurus"><Icon w={30} h={30} stroke="#7fd0c8" sw={1}><circle cx="15" cy="15" r="15" fill="#069a8e" stroke="none" /><path d="M12 8h10v5M18 9v13h-4" /><path d="M7 7h12v5h-1.500l-.5-2.500h-2.500V21l2 .5V23H9.500v-1.500l2-.5V9.500H9L8.500 12H7z" fill="#fff" stroke="none" /></Icon></TaskButton>
    <TaskButton $full $bar="#ff7300" $bg="#f4b17b" aria-label="Spotify"><Icon w={30} h={30} stroke="#1ed760" sw={1.500}><path d="M0 0h30v30H0z" fill="#1ed760" stroke="none" /><circle cx="15" cy="15" r="7.800" fill="#fff" stroke="none" /><path d="M10.500 12.500q5-1.500 9.500.8M11 15.500q4-1.200 8 .7M11.500 18.200q3.500-.9 6.500.6" /></Icon></TaskButton>
    <TaskButton $full $bar="#2bb8cf" $bg="#e9f2f5" aria-label="Word"><Icon w={30} h={28} stroke="none"><path d="M7 0h22v7H7z" fill="#41a5ee" /><path d="M7 7h22v7H7z" fill="#2b7cd3" /><path d="M7 14h22v7H7z" fill="#185abd" /><path d="M7 21h22v7H7z" fill="#103f91" /><path d="M0 6h15v16H0z" fill="#185abd" /><path d="M3 10l2 7.500L7.500 11 10 17.500 12 10" stroke="#fff" strokeWidth="1.600" /></Icon></TaskButton>
    <Tray>
      <TrayButton $w={36} aria-label="Help"><Icon w={30} h={28} stroke="none"><circle cx="13.500" cy="14" r="13" fill="#fff" /><circle cx="13.500" cy="14" r="10.500" fill="#0a95dc" /><path d="M9.500 11q0-4 4-4t4 3.500q0 2-2 3.200T13.500 17" stroke="#fff" strokeWidth="2.800" /><circle cx="13.500" cy="20.500" r="1.700" fill="#fff" /><circle cx="24" cy="20" r="6" fill="#0a86cc" /><path d="M24 18.500v4.500M24 15.500v1.700" stroke="#fff" strokeWidth="1.800" /></Icon></TrayButton>
      <Gap $w={22} />
      <Weather>
        <Icon w={27} h={26} stroke="none"><path d="M6 15a5 5 0 0 1 0-9 8 8 0 0 1 13-3 6 6 0 0 1 6 12z" fill="#dcecfc" /><path d="M12 13a5 5 0 0 1 6-7 6 6 0 0 1 7 9H12z" fill="#a9cdf5" /><path d="M13 12l2 4a2 2 0 1 1-4 0zM7 18l2 4a2 2 0 1 1-4 0zM20 16l2 4a2 2 0 1 1-4 0z" fill="#2f8be8" /></Icon>
        28°C
      </Weather>
      <Gap $w={4} />
      <TrayButton $w={32} aria-label="Show hidden icons"><Icon w={17} h={10} stroke="#111" sw={1.400}><path d="M1 9l7.500-7.500L16 9" /></Icon></TrayButton>
      <TrayButton $w={30} aria-label="Camera"><Icon w={16} h={18} stroke="#111" sw={1.300}><path d="M1.500 5h9v8h-9zM10.500 8l4-2v6l-4-2M3 2q3.500-2 7 0M3 16q3.500 2 7 0" /></Icon></TrayButton>
      <TrayButton $w={30} aria-label="OneDrive"><Icon w={21} h={20} stroke="#222" sw={1.200}><path d="M5 13.500a4 4 0 0 1-.5-7.500A6 6 0 0 1 15 4.500a4.500 4.500 0 0 1 3 8z" fill="#8a8a8a" /><circle cx="14.500" cy="13.500" r="5.500" fill="#e01b2e" stroke="none" /><path d="M11.500 13.500h6" stroke="#fff" strokeWidth="1.600" /></Icon></TrayButton>
      <TrayButton $w={30} aria-label="Wi-Fi"><Icon w={16} h={16} stroke="#222" sw={1.200}><path d="M1 15Q1 1 15 1M4.500 15Q4.500 5 15 5M8 15Q8 9 15 9" /><circle cx="13.500" cy="13.500" r="1.600" fill="#222" /></Icon></TrayButton>
      <TrayButton $w={30} aria-label="Battery"><Icon w={19} h={12} stroke="#000" sw={1.300}><path d="M.7.7h15.800v10.600H.7zM17.500 4v4.500" /><path d="M2.500 2.500h9v7h-9z" fill="#000" stroke="none" /></Icon></TrayButton>
      <TrayButton $w={28} aria-label="Volume"><Icon w={20} h={17} stroke="#111" sw={1.300}><path d="M1 6h2.500L8 2v13l-4.500-4H1zM10.500 6q1.500 2.500 0 5M13.500 4q3 4.500 0 9M16 1.500q4.500 7 0 14" /></Icon></TrayButton>
      <TrayButton $w={48}>ENG</TrayButton>
      <Clock><span>11:10</span><span>23-07-2021</span></Clock>
      <Gap $w={6} />
      <TrayButton $w={54} aria-label="Notifications">
        <Badged>
          <Icon w={20} h={20} stroke="#fff" sw={1.300}><path d="M0 0h20v17h-8l-3 3v-3H0z" fill="#000" stroke="none" /><path d="M4 4.500h12M4 8.500h12M4 12.500h8" /></Icon>
          <Badge>2</Badge>
        </Badged>
      </TrayButton>
      <Peek />
    </Tray>
  </Taskbar>
);

export default function App() {
  return (
    <Window>
      <GlobalStyle />
      <TitleRegion />
      <TabBar>
        {TABS.map((t) => <Tab key={t} $active={t === "Home"}>{t}</Tab>)}
        <TabActions>
          <ActionButton><Icon w={15} h={16} stroke="#2b579a"><path d="M5 5.500H1v9.300h11.500V10M4 11q1-6 6.500-6V2l4 4.500-4 4v-3Q6 7.500 4 11z" /></Icon>Share</ActionButton>
          <ActionButton><Icon w={14} h={14} stroke="#2b579a"><path d="M.7.7h12.600v9H6L3.500 12.500V9.700H.7z" /></Icon>Comments</ActionButton>
        </TabActions>
      </TabBar>
      <RibbonRegion />
      <DocumentRegion />
      <StatusRegion />
      <TaskbarRegion />
    </Window>
  );
}
